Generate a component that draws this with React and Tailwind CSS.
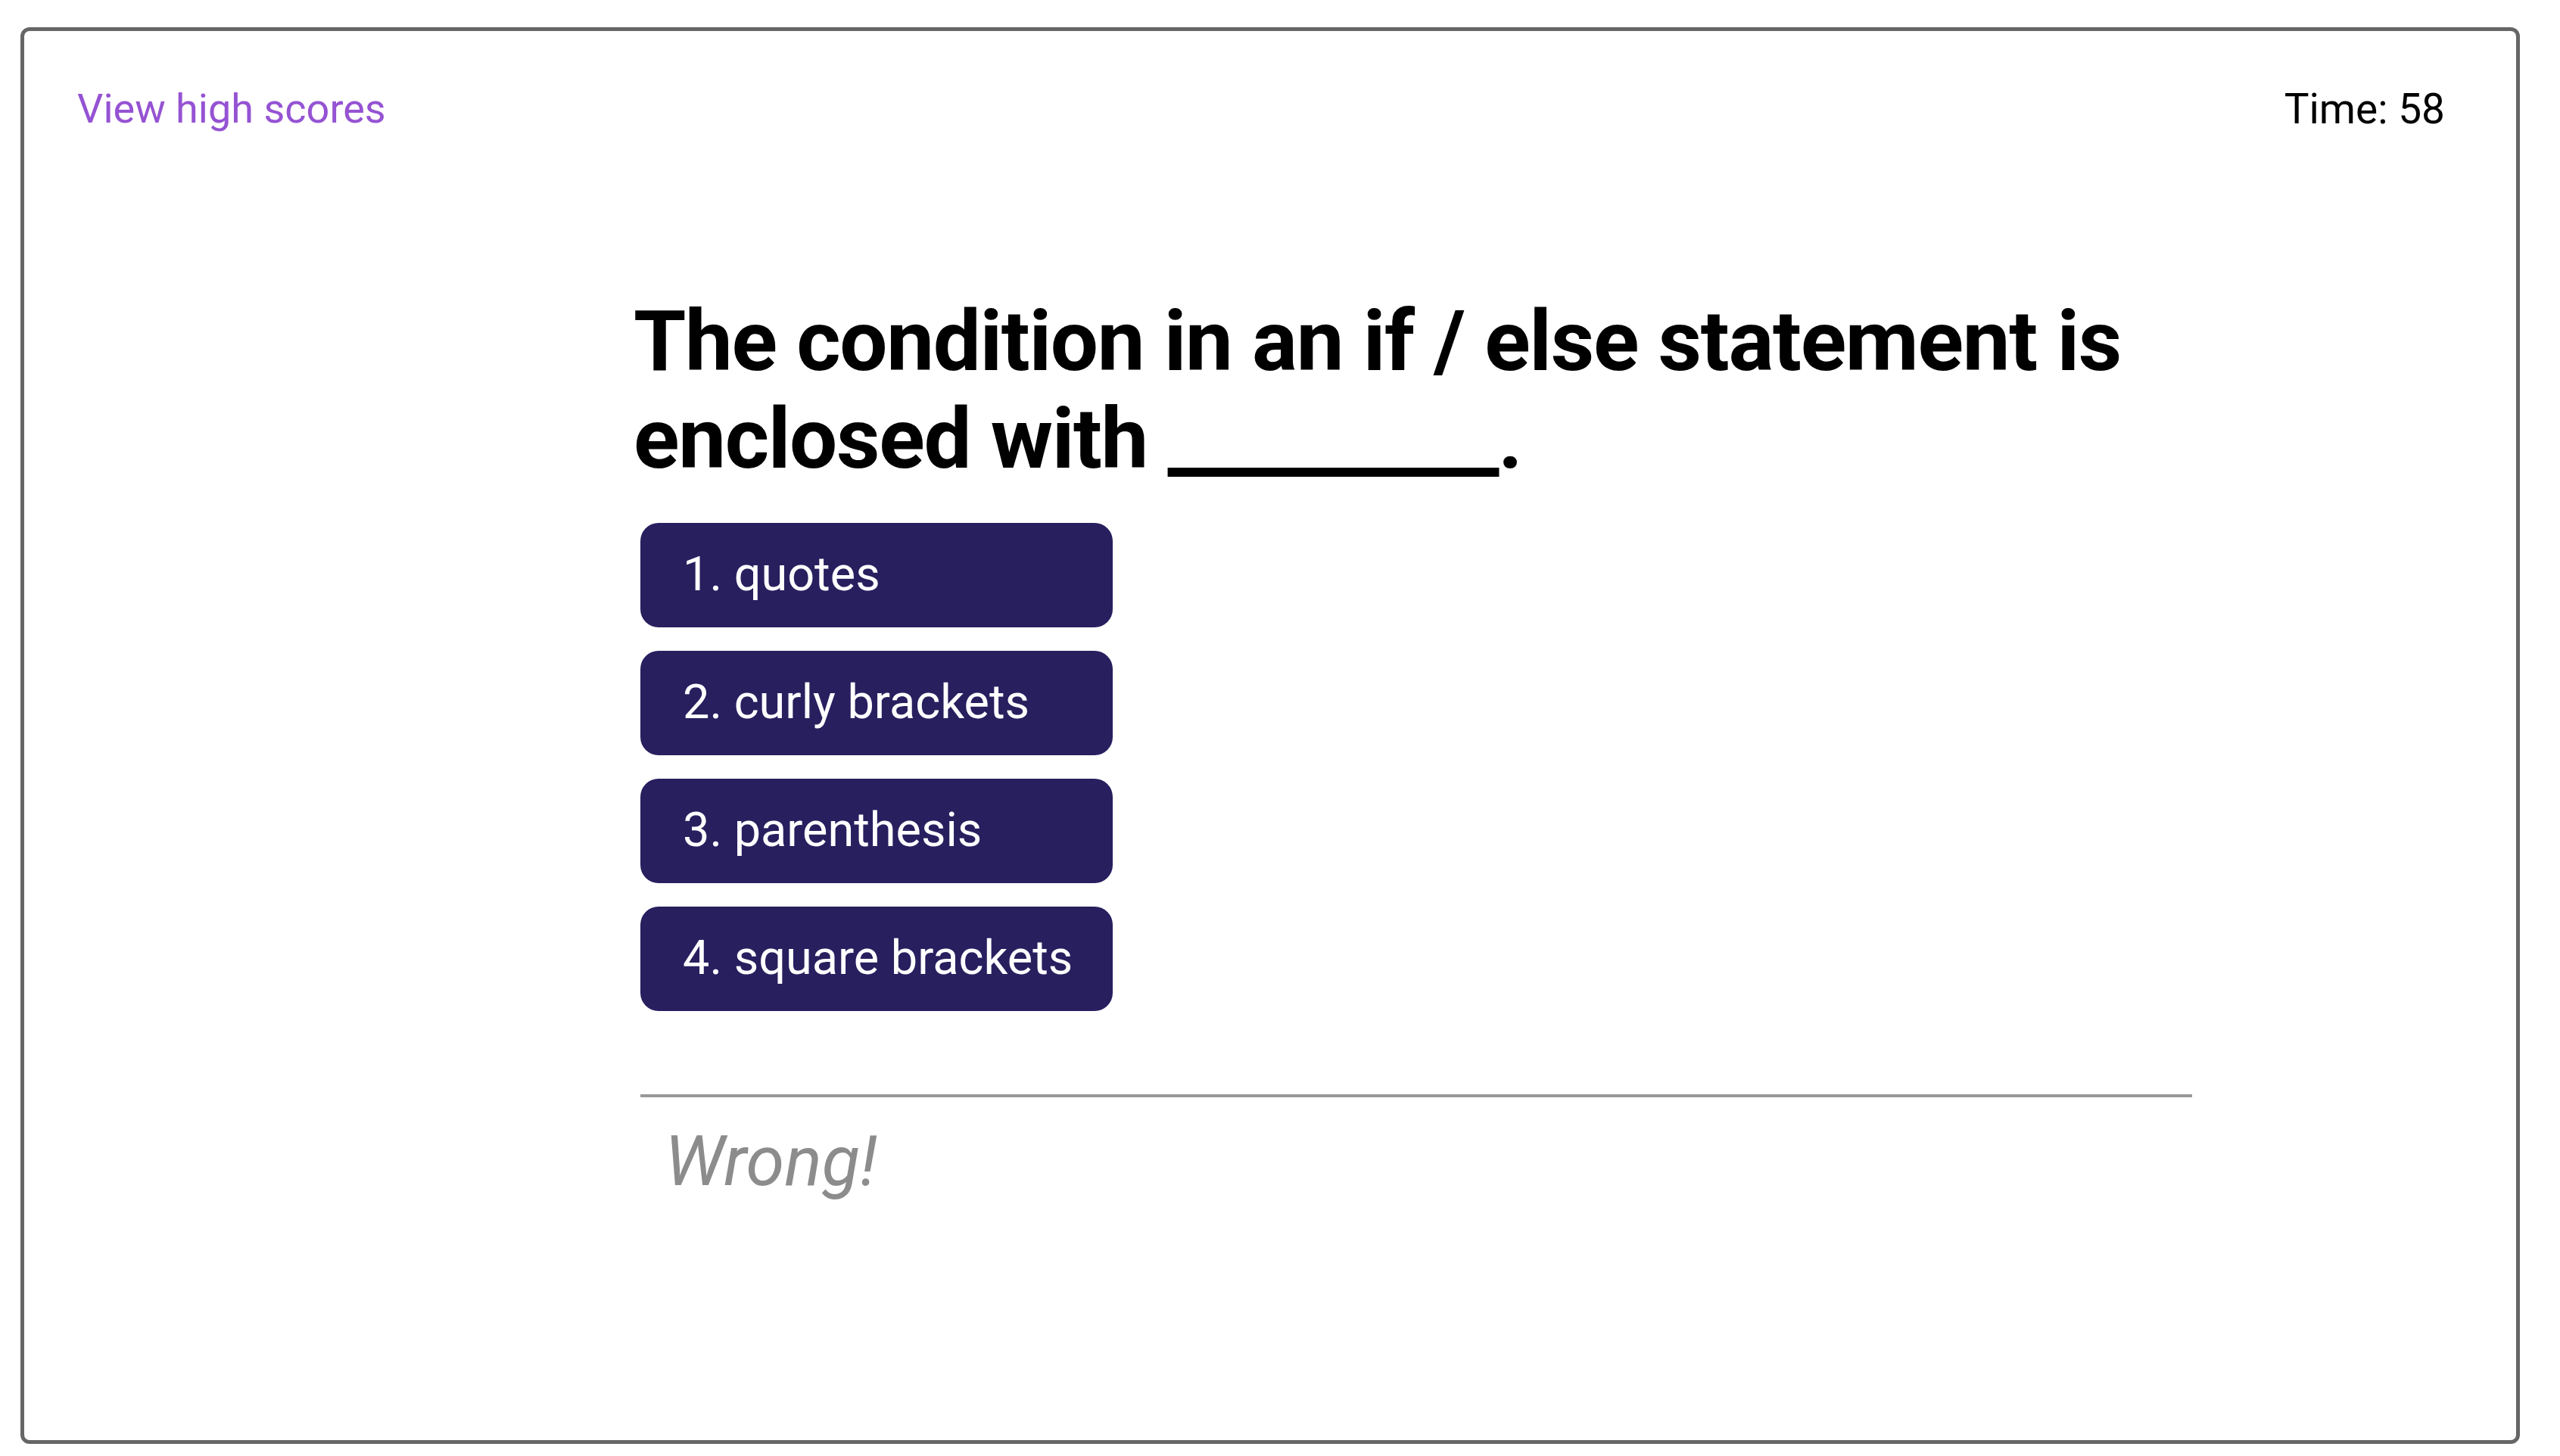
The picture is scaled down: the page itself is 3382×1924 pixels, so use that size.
import React from "react";

const answers = ["1. quotes", "2. curly brackets", "3. parenthesis", "4. square brackets"];

export default function App() {
  return (
    <div className="min-h-screen bg-white pl-[27px] pt-[36px] font-['Roboto',sans-serif]">
      {/* Quiz frame */}
      <div className="w-[3302px] h-[1872px] border-[5px] border-[#666666] rounded-[12px] bg-white">
        {/* Top bar */}
        <header className="flex items-start justify-between pl-[70px] pr-[94px] pt-[62px]">
          <a href="#" className="text-[54px] text-[#9553d3]">
            View high scores
          </a>
          <span className="text-[55px] text-black">Time: 58</span>
        </header>

        {/* Question area */}
        <main className="pl-[805px] mt-[200px] w-[2870px]">
          <h1 className="text-[112px] leading-[129px] font-bold tracking-[-1.3px] text-black w-[2060px]">
            The condition in an if / else statement is enclosed with _________.
          </h1>

          <div className="ml-[9px] mt-[47px] flex flex-col gap-[31px]">
            {answers.map((answer) => (
              <button
                key={answer}
                className="w-[624px] h-[138px] flex items-center pl-[56px] rounded-[24px] bg-[#281f5f] text-white text-[63px] text-left"
              >
                {answer}
              </button>
            ))}
          </div>

          {/* Result */}
          <div className="ml-[9px] mt-[110px] w-[2050px] border-t-[4px] border-[#999999]">
            <p className="pl-[32px] pt-[16px] text-[92px] italic text-[#8c8c8c]">Wrong!</p>
          </div>
        </main>
      </div>
    </div>
  );
}
